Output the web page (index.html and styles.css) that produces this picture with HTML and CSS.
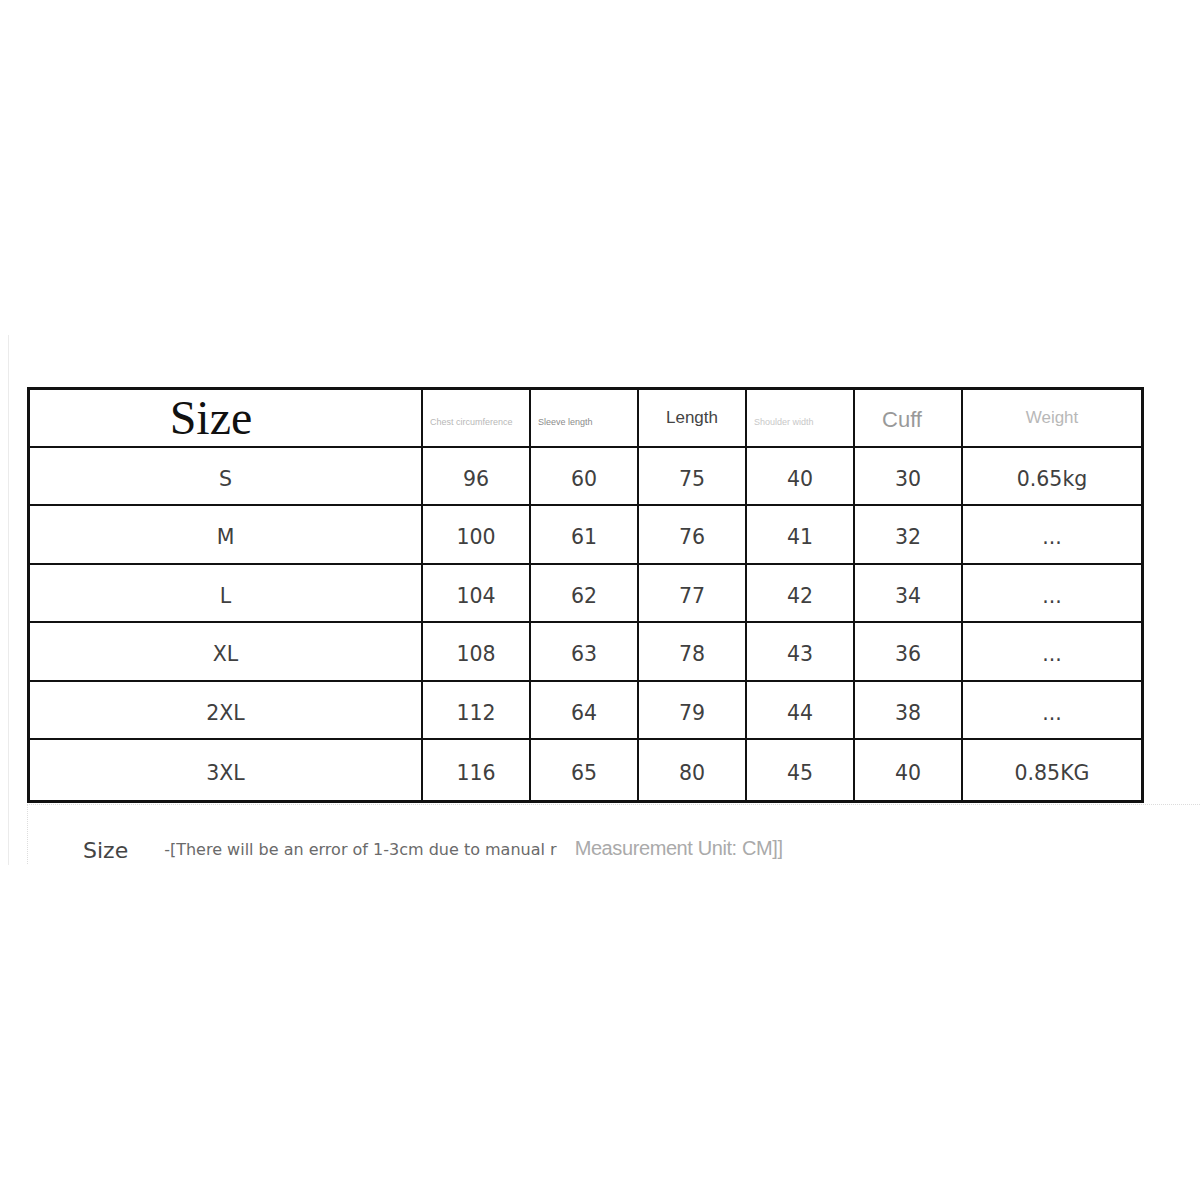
FILE: index.html
```html
<!DOCTYPE html>
<html>
<head>
<meta charset="utf-8">
<link rel="stylesheet" href="styles.css">
</head>
<body>
<div class="page">
  <div class="frame">
    <table class="sizes">
      <colgroup>
        <col class="c-size"><col class="c-num"><col class="c-num"><col class="c-num"><col class="c-num"><col class="c-num"><col class="c-weight">
      </colgroup>
      <tr class="head">
        <td class="h-size">Size</td>
        <td class="h-tiny h-chest">Chest circumference</td>
        <td class="h-tiny h-sleeve">Sleeve length</td>
        <td class="h-length">Length</td>
        <td class="h-tiny h-shoulder">Shoulder width</td>
        <td class="h-cuff">Cuff</td>
        <td class="h-weight">Weight</td>
      </tr>
      <tr><td>S</td><td>96</td><td>60</td><td>75</td><td>40</td><td>30</td><td>0.65kg</td></tr>
      <tr><td>M</td><td>100</td><td>61</td><td>76</td><td>41</td><td>32</td><td>...</td></tr>
      <tr><td>L</td><td>104</td><td>62</td><td>77</td><td>42</td><td>34</td><td>...</td></tr>
      <tr><td>XL</td><td>108</td><td>63</td><td>78</td><td>43</td><td>36</td><td>...</td></tr>
      <tr><td>2XL</td><td>112</td><td>64</td><td>79</td><td>44</td><td>38</td><td>...</td></tr>
      <tr class="last"><td>3XL</td><td>116</td><td>65</td><td>80</td><td>45</td><td>40</td><td>0.85KG</td></tr>
    </table>
    <div class="rule"></div>
    <div class="note"><span class="note-size">Size</span><span class="note-error">-[There will be an error of 1-3cm due to manual r</span><span class="note-unit">Measurement Unit: CM]]</span></div>
  </div>
</div>
</body>
</html>
```
FILE: styles.css
```css
html, body {
  margin: 0;
  padding: 0;
  background: #fff;
}
.page {
  padding: 335px 0 0 8px;
  font-family: "DejaVu Sans", "Liberation Sans", sans-serif;
}
.frame {
  border-left: 1px solid #ebebeb;
  height: 530px;
  padding: 52px 0 0 18px;
  box-sizing: border-box;
}
.sizes {
  border-collapse: separate;
  border-spacing: 0;
  table-layout: fixed;
  width: 1117px;
  border: 3px solid #111;
}
.c-size { width: 393px; }
.c-num { width: 108px; }
.c-weight { width: 178px; }
.sizes td {
  box-sizing: border-box;
  height: 58.6px;
  padding: 6px 0 0 0;
  border-right: 2px solid #111;
  border-bottom: 2px solid #111;
  text-align: center;
  vertical-align: middle;
  font-family: "DejaVu Sans", sans-serif;
  font-size: 20.5px;
  line-height: 1.2;
  color: #404040;
  white-space: nowrap;
  overflow: hidden;
}
.sizes td:last-child { border-right: none; }
.sizes tr.last td { border-bottom: none; height: 60px; }
.sizes tr.head td { height: 57.5px; }
.h-size {
  font-family: "Liberation Serif", serif !important;
  font-size: 48px !important;
  line-height: 1 !important;
  color: #111 !important;
  padding: 0 29px 0 0 !important;
}
.h-tiny {
  text-align: left !important;
  font-family: "Liberation Sans", sans-serif !important;
  font-size: 9px !important;
  padding: 9px 0 0 7px !important;
}
.h-chest { color: #b8b8b8 !important; }
.h-sleeve { color: #8c8c8c !important; }
.h-shoulder { color: #c8c8c8 !important; }
.h-length {
  font-family: "Liberation Sans", sans-serif !important;
  font-size: 17px !important;
  color: #444 !important;
  padding: 1px 0 0 0 !important;
}
.h-cuff {
  font-family: "Liberation Sans", sans-serif !important;
  font-size: 22px !important;
  color: #999 !important;
  padding: 4px 12px 0 0 !important;
}
.h-weight {
  font-family: "Liberation Sans", sans-serif !important;
  font-size: 17px !important;
  color: #b8b8b8 !important;
  padding: 0 !important;
}
.rule {
  margin-top: 1px;
  border-top: 1px dotted #dcdcdc;
}
.note {
  border-left: 1px dotted #dddddd;
  height: 61px;
  box-sizing: border-box;
  padding: 32px 0 0 55px;
  white-space: nowrap;
}
.note-size {
  font-family: "DejaVu Sans", sans-serif;
  font-size: 22px;
  color: #444;
  vertical-align: -3px;
}
.note-error {
  font-family: "DejaVu Sans", sans-serif;
  font-size: 16px;
  color: #6a6a6a;
  margin-left: 36px;
}
.note-unit {
  font-family: "Liberation Sans", sans-serif;
  font-size: 20px;
  color: #aaa;
  margin-left: 18px;
  letter-spacing: -0.4px;
}
```
